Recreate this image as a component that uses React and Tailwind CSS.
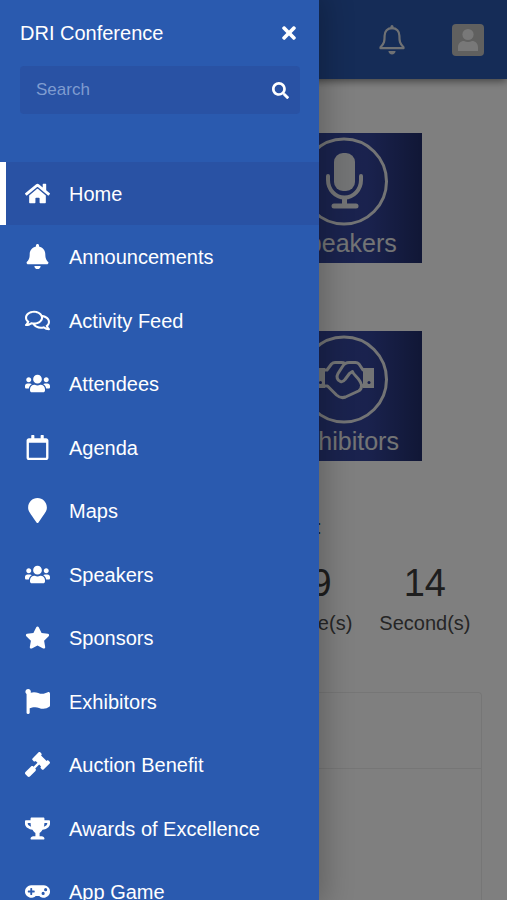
import React, { useState } from 'react';
import {
  FaHome,
  FaBell,
  FaRegComments,
  FaUsers,
  FaRegCalendar,
  FaMapMarker,
  FaStar,
  FaFlag,
  FaGavel,
  FaTrophy,
  FaGamepad,
  FaSearch,
  FaTimes,
} from 'react-icons/fa';

const MENU = [
  { label: 'Home', icon: FaHome },
  { label: 'Announcements', icon: FaBell },
  { label: 'Activity Feed', icon: FaRegComments },
  { label: 'Attendees', icon: FaUsers },
  { label: 'Agenda', icon: FaRegCalendar },
  { label: 'Maps', icon: FaMapMarker },
  { label: 'Speakers', icon: FaUsers },
  { label: 'Sponsors', icon: FaStar },
  { label: 'Exhibitors', icon: FaFlag },
  { label: 'Auction Benefit', icon: FaGavel },
  { label: 'Awards of Excellence', icon: FaTrophy },
  { label: 'App Game', icon: FaGamepad },
];

function BellIcon() {
  return (
    <svg viewBox="0 0 28 32" className="w-7 h-8" fill="none" stroke="currentColor" strokeWidth="2.2" strokeLinejoin="round">
      <path d="M14 4.2c-4.5 0-7.4 3-7.400 7.600 0 5.500-.3 7.700-4.100 11.500v.9h23v-.9c-3.800-3.800-4.100-6-4.100-11.500 0-4.600-2.900-7.600-7.400-7.600z" />
      <path d="M14 2.500v1.200" strokeWidth="3" strokeLinecap="round" />
      <path d="M10.400 27h7.200c-.3 2.200-1.700 3.500-3.600 3.500s-3.300-1.300-3.600-3.500z" fill="currentColor" stroke="none" />
    </svg>
  );
}

function PersonIcon() {
  return (
    <svg viewBox="0 0 32 32" className="w-8 h-8" fill="currentColor">
      <circle cx="16" cy="10.500" r="5.600" />
      <path d="M6 27v-3.500c0-4 2.500-6.500 6-6.500 1.300.7 2.500 1 4 1s2.700-.3 4-1c3.500 0 6 2.500 6 6.500V27z" />
    </svg>
  );
}

function MicArt() {
  return (
    <svg viewBox="0 0 90 90" className="w-[90px] h-[90px]" fill="none" stroke="currentColor">
      <circle cx="45" cy="44.500" r="42.500" strokeWidth="3" />
      <rect x="35" y="16" width="21" height="38" rx="9" fill="currentColor" stroke="none" />
      <path d="M29 39v4a16.500 17.500 0 0 0 33 0v-4" strokeWidth="4" strokeLinecap="round" />
      <path d="M45.500 61v7" strokeWidth="5" />
      <path d="M35 69h22" strokeWidth="5" strokeLinecap="round" />
    </svg>
  );
}

function HandshakeArt() {
  return (
    <svg viewBox="0 0 90 90" className="w-[90px] h-[90px]" fill="none" stroke="currentColor">
      <circle cx="45" cy="44.500" r="42.500" strokeWidth="3" />
      <rect x="15" y="33" width="11" height="20" fill="currentColor" stroke="none" />
      <rect x="64" y="33" width="11" height="20" fill="currentColor" stroke="none" />
      <circle cx="21.500" cy="47.500" r="1.500" fill="#2a3a96" stroke="none" />
      <circle cx="70" cy="47.500" r="1.500" fill="#2a3a96" stroke="none" />
      <g strokeWidth="3" strokeLinejoin="round" strokeLinecap="round">
        <path d="M26 35h2l4.500-6c1-1 2-1.500 3.500-1.500h6.500c1.500 0 2.500.3 3.500 1" />
        <path d="M64 35l-4-6c-1-1-2-1.500-3.500-1.500H50c-3 0-5 1.500-6.500 4l-4.500 7c-1.800 3-1 7 2.500 8 2 .5 3.500-.5 4.500-2l4.500-6 3-2c1 4 7.500 6.500 9 13.500" />
        <path d="M26 51h2.500l9 9c3 2.700 6 3.200 9 2l13-6c2-1 3-3 3-5.500l1.500.5" />
      </g>
    </svg>
  );
}

function Tile({ label, children }) {
  return (
    <a
      href="#"
      className="col-start-2 w-[156px] h-[130px] pt-1 flex flex-col items-center text-[#e6e8ea] bg-linear-to-r from-[#34489e] via-[#34459c] via-65% to-[#222e6c]"
    >
      {children}
      <span className="text-[25px] leading-8">{label}</span>
    </a>
  );
}

function CountdownUnit({ value, unit }) {
  return (
    <div>
      <div className="text-[38px] leading-[46px] text-[#3c3c3c]">{value}</div>
      <div className="text-[20px] leading-[34px] text-[#4c4c4c]">{unit}</div>
    </div>
  );
}

function Page() {
  return (
    <div className="h-full flex flex-col">
      <header className="h-[79px] shrink-0 px-[23px] flex items-center justify-end gap-[46px] bg-[#2a58ae] shadow-[0_2px_8px_rgba(0,0,0,0.5)]">
        <button aria-label="Notifications" className="text-[#dfe3e8]">
          <BellIcon />
        </button>
        <button aria-label="Profile" className="rounded-sm bg-[#c0c0be] text-[#f0f0f0]">
          <PersonIcon />
        </button>
      </header>
      <main className="flex-1 px-[25px] pt-[54px] flex flex-col">
        <div className="mx-auto grid grid-cols-[156px_156px] gap-x-[25px] gap-y-[68px]">
          <Tile label="Speakers">
            <MicArt />
          </Tile>
          <Tile label="Exhibitors">
            <HandshakeArt />
          </Tile>
        </div>
        <section className="mt-[52px] text-center">
          <h2 className="text-[20px] leading-7 text-[#3c4a60]">Event Starts In:</h2>
          <div className="mt-[19px] grid grid-cols-4">
            <div className="col-start-3">
              <CountdownUnit value="39" unit="Minute(s)" />
            </div>
            <CountdownUnit value="14" unit="Second(s)" />
          </div>
        </section>
        <section className="mt-[52px] flex-1 rounded-t border border-b-0 border-[#ececec]">
          <div className="h-[76px] border-b border-[#ececec]" />
        </section>
      </main>
    </div>
  );
}

function Drawer({ onClose }) {
  const [active, setActive] = useState('Home');
  const [query, setQuery] = useState('');

  return (
    <aside className="absolute inset-y-0 left-0 w-[319px] max-w-full overflow-hidden bg-[#2a5aaf] text-white shadow-[0_0_28px_6px_rgba(0,0,0,0.24)]">
      <div className="pl-5 pr-[19px] pt-[17px]">
        <div className="flex items-center justify-between pr-1">
          <h1 className="text-[20px] leading-8">DRI Conference</h1>
          <button aria-label="Close menu" onClick={onClose}>
            <FaTimes className="w-[14px] h-5" />
          </button>
        </div>
        <form
          onSubmit={(e) => e.preventDefault()}
          className="mt-[17px] h-12 px-4 pr-[11px] flex items-center rounded bg-[#2952a4]"
        >
          <input
            type="text"
            aria-label="Search"
            placeholder="Search"
            value={query}
            onChange={(e) => setQuery(e.target.value)}
            className="flex-1 min-w-0 bg-transparent text-[17px] leading-6 outline-none placeholder:text-[#7f9cd0]"
          />
          <button type="submit" aria-label="Submit search">
            <FaSearch className="w-[17px] h-[17px]" />
          </button>
        </form>
      </div>
      <nav className="mt-[47px]">
        <ul className="flex flex-col">
          {MENU.map(({ label, icon: Icon }) => (
            <li key={label} className="odd:mt-px">
              <a
                href="#"
                onClick={() => setActive(label)}
                className={`h-[63px] pl-[19px] flex items-center gap-[19px] border-l-[6px] text-[20px] leading-7 ${
                  active === label ? 'border-white bg-[#2952a4]' : 'border-transparent'
                }`}
              >
                <Icon className="w-[25px] h-[25px] shrink-0" />
                <span>{label}</span>
              </a>
            </li>
          ))}
        </ul>
      </nav>
    </aside>
  );
}

export default function App() {
  const [open, setOpen] = useState(true);

  return (
    <div className="relative h-screen overflow-hidden bg-white font-['Liberation_Sans',Arial,sans-serif]">
      <Page />
      {open && (
        <>
          <div className="absolute inset-0 bg-black/50" onClick={() => setOpen(false)} />
          <Drawer onClose={() => setOpen(false)} />
        </>
      )}
    </div>
  );
}
